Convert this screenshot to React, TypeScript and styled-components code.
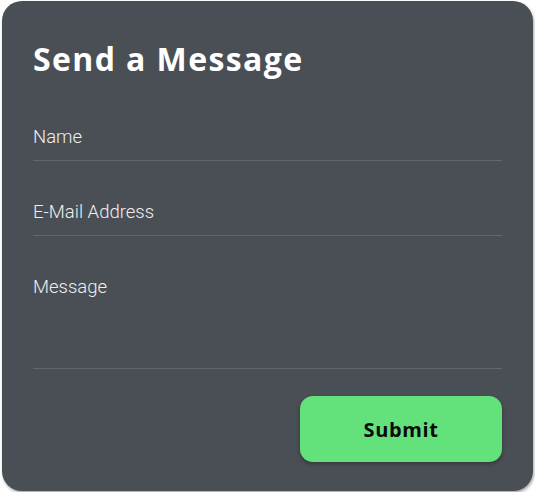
import React from 'react';
import styled, { createGlobalStyle } from 'styled-components';

const GlobalStyle = createGlobalStyle`
  html, body {
    margin: 0;
    padding: 0;
    background: #ffffff;
  }
`;

const Card = styled.form`
  box-sizing: border-box;
  width: 531px;
  height: 490px;
  margin: 1px 2px;
  padding: 38px 31px 0 31px;
  background-color: #4a4f56;
  border-radius: 20px;
  box-shadow: 1px 2px 3px rgba(0, 0, 0, 0.35);
  display: flex;
  flex-direction: column;
`;

const Title = styled.h1`
  margin: 0 0 40px 0;
  font-family: 'Open Sans', sans-serif;
  font-weight: 700;
  font-size: 32px;
  line-height: 40px;
  letter-spacing: 1.4px;
  color: #ffffff;
`;

const Fields = styled.div`
  display: flex;
  flex-direction: column;
  gap: 33px;
`;

const Input = styled.input`
  box-sizing: border-box;
  width: 100%;
  height: 42px;
  padding: 0 0 6px 0;
  border: none;
  border-bottom: 1px solid #62676e;
  background: transparent;
  font-family: 'Roboto', sans-serif;
  font-weight: 300;
  font-size: 18.5px;
  color: #f2f2f2;
  outline: none;

  &::placeholder {
    color: #eeeeee;
  }
`;

const TextArea = styled.textarea`
  box-sizing: border-box;
  width: 100%;
  height: 100px;
  padding: 7px 0 0 0;
  border: none;
  border-bottom: 1px solid #62676e;
  background: transparent;
  font-family: 'Roboto', sans-serif;
  font-weight: 300;
  font-size: 18.5px;
  color: #f2f2f2;
  resize: none;
  outline: none;

  &::placeholder {
    color: #eeeeee;
  }
`;

const Actions = styled.div`
  display: flex;
  justify-content: flex-end;
  margin-top: 27px;
`;

const SubmitButton = styled.button`
  width: 202px;
  height: 66px;
  border: none;
  border-radius: 13px;
  background-color: #63e27c;
  box-shadow: 0 2px 4px rgba(0, 0, 0, 0.3);
  font-family: 'Open Sans', sans-serif;
  font-weight: 700;
  font-size: 20px;
  letter-spacing: 0.6px;
  color: #0a0a0a;
  cursor: pointer;
`;

function App() {
  return (
    <>
      <GlobalStyle />
      <Card onSubmit={(e) => e.preventDefault()}>
        <Title>Send a Message</Title>
        <Fields>
          <Input type="text" placeholder="Name" />
          <Input type="email" placeholder="E-Mail Address" />
          <TextArea placeholder="Message" />
        </Fields>
        <Actions>
          <SubmitButton type="submit">Submit</SubmitButton>
        </Actions>
      </Card>
    </>
  );
}

export default App;
